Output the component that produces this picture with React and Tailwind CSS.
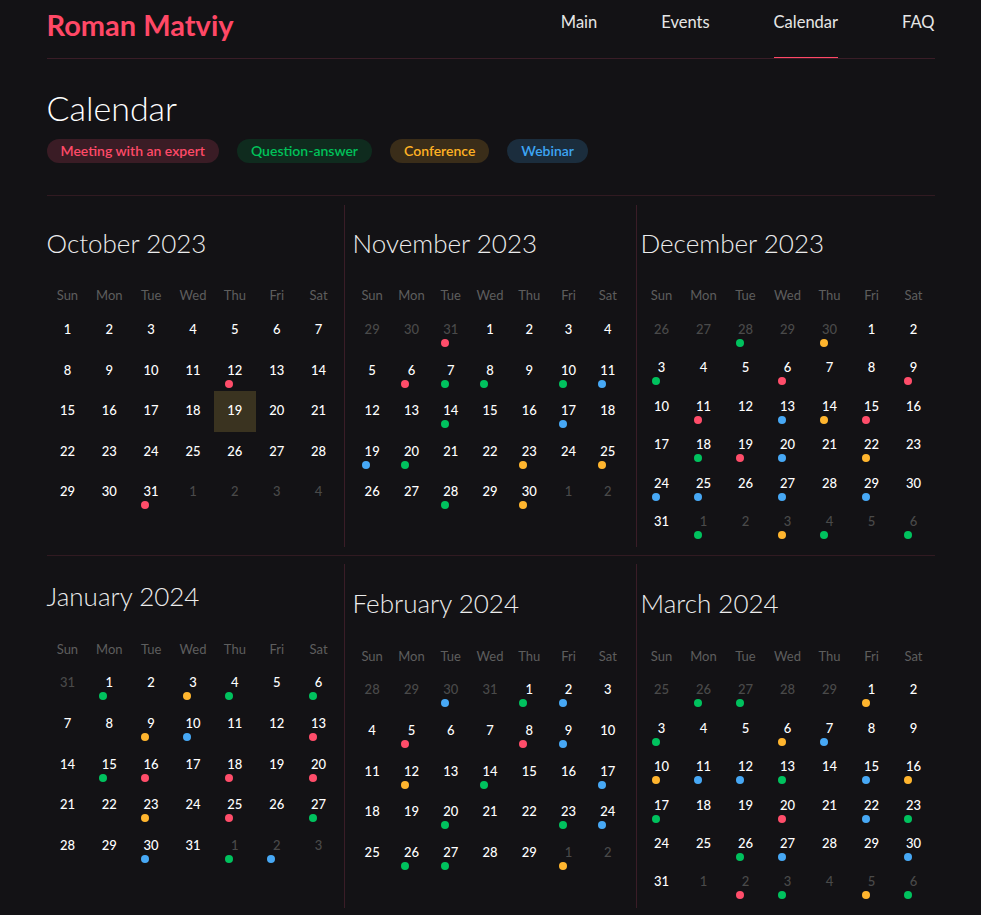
import clsx from 'clsx';

const DOT = {
  r: 'bg-[#ff4d6a]',
  g: 'bg-[#00c25e]',
  y: 'bg-[#ffb52e]',
  b: 'bg-[#47a8f5]',
};

// events keyed by y-m (m is 1-based), then day
const RAW = {
  '2023-10': { 12: 'r', 31: 'r' },
  '2023-11': { 6: 'r', 7: 'g', 8: 'g', 10: 'g', 11: 'b', 14: 'g', 17: 'b', 19: 'b', 20: 'g', 23: 'y', 25: 'y', 28: 'g', 30: 'y' },
  '2023-12': { 3: 'g', 6: 'r', 9: 'r', 11: 'r', 13: 'b', 14: 'y', 15: 'r', 18: 'g', 19: 'r', 20: 'b', 22: 'y', 24: 'b', 25: 'b', 27: 'b', 29: 'b' },
  '2024-1': { 1: 'g', 3: 'y', 4: 'g', 6: 'g', 9: 'y', 10: 'b', 13: 'r', 15: 'g', 16: 'r', 18: 'r', 20: 'r', 23: 'y', 25: 'r', 27: 'g', 30: 'b' },
  '2024-2': { 1: 'g', 2: 'b', 5: 'r', 8: 'r', 9: 'b', 12: 'y', 14: 'g', 17: 'b', 20: 'g', 23: 'g', 24: 'b', 26: 'g', 27: 'g' },
  '2024-3': { 1: 'y', 3: 'g', 6: 'y', 7: 'b', 10: 'y', 11: 'b', 12: 'b', 13: 'g', 15: 'b', 16: 'y', 17: 'g', 20: 'r', 22: 'b', 23: 'g', 26: 'g', 27: 'b', 30: 'b' },
  '2024-4': { 2: 'r', 3: 'g', 5: 'y', 6: 'g' },
};

const eventFor = (d) => RAW[`${d.getFullYear()}-${d.getMonth() + 1}`]?.[d.getDate()];

const MONTHS = ['January', 'February', 'March', 'April', 'May', 'June', 'July', 'August', 'September', 'October', 'November', 'December'];
const WEEK = ['Sun', 'Mon', 'Tue', 'Wed', 'Thu', 'Fri', 'Sat'];

function buildDays(year, month) {
  const first = new Date(year, month, 1);
  const last = new Date(year, month + 1, 0);
  const days = [];
  const cur = new Date(year, month, 1 - first.getDay());
  const end = new Date(year, month, last.getDate() + (6 - last.getDay()));
  while (cur <= end) {
    days.push(new Date(cur));
    cur.setDate(cur.getDate() + 1);
  }
  return days;
}

function Month({ year, month, className }) {
  const days = buildDays(year, month);
  const six = days.length > 35;

  return (
    <div className={clsx('flex flex-col pb-[7px]', className)}>
      <h2 className="h-[34px] text-[26px] font-light leading-[34px] text-[#ececec]">
        {MONTHS[month]} {year}
      </h2>
      <div className="mt-[22px] grid h-[28px] grid-cols-7 items-center text-center text-[13px] text-[#5e5e5e]">
        {WEEK.map((w) => (
          <span key={w}>{w}</span>
        ))}
      </div>
      <div className="grid grid-cols-7">
        {days.map((d) => {
          const inMonth = d.getMonth() === month;
          const ev = eventFor(d);
          const today = d.getFullYear() === 2023 && d.getMonth() === 9 && d.getDate() === 19;
          return (
            <div
              key={d.toISOString()}
              className={clsx(
                'relative pt-[9px] text-center text-[13px] font-medium leading-5',
                six ? 'h-[38.4px]' : 'h-[40.6px]',
                inMonth ? 'text-white' : 'text-[#4a4a4a]',
                today && 'bg-[#3a3320]'
              )}
            >
              {d.getDate()}
              {ev && (
                <span
                  className={clsx(
                    'absolute left-[calc(50%-10px)] top-[29px] h-2 w-2 rounded-full',
                    DOT[ev]
                  )}
                />
              )}
            </div>
          );
        })}
      </div>
    </div>
  );
}

const chips = [
  { label: 'Meeting with an expert', cls: 'bg-[#3a1c25] text-[#ff4a68]' },
  { label: 'Question-answer', cls: 'bg-[#0f2b1e] text-[#00c25a]' },
  { label: 'Conference', cls: 'bg-[#3a2d19] text-[#ffb224]' },
  { label: 'Webinar', cls: 'bg-[#1b2d3d] text-[#3da5f4]' },
];

const nav = ['Main', 'Events', 'Calendar', 'FAQ'];

export default function App() {
  return (
    <div className="min-h-screen bg-[#131215] font-['Lato','Noto_Sans',sans-serif]">
      <div className="mx-auto w-[888px] pb-6">
        <header className="flex h-[59px] items-start justify-between border-b border-[#3a1d27]">
          <a className="mt-[8px] text-[29px] font-bold leading-[34px] text-[#ff4866]">Roman Matviy</a>
          <nav className="flex h-full gap-16">
            {nav.map((n) => (
              <a
                key={n}
                className={clsx(
                  'h-full pt-[10px] text-[16.5px] leading-6 text-[#e6e6e6]',
                  n === 'Calendar' && 'border-b border-[#ff4866]'
                )}
              >
                {n}
              </a>
            ))}
          </nav>
        </header>

        <h1 className="mt-[28px] text-[34px] font-light leading-[41px] text-white">Calendar</h1>
        <div className="mt-[11px] flex gap-[18px]">
          {chips.map((c) => (
            <span key={c.label} className={clsx('h-6 rounded-full px-[14px] text-[14px] font-semibold leading-6', c.cls)}>
              {c.label}
            </span>
          ))}
        </div>

        <div className="mt-[32px] border-t border-[#311a21]" />

        <div className="mt-[9px] flex items-stretch">
          <Month year={2023} month={9} className="w-[297px] pr-1 pt-[21px]" />
          <Month year={2023} month={10} className="w-[293px] border-x border-[#3a1d27] px-2 pt-[21px]" />
          <Month year={2023} month={11} className="flex-1 pl-1 pt-[21px]" />
        </div>

        <div className="mt-2 border-t border-[#311a21]" />

        <div className="mt-2 flex items-stretch">
          <Month year={2024} month={0} className="w-[297px] pr-1 pt-[15px]" />
          <Month year={2024} month={1} className="w-[293px] border-x border-[#3a1d27] px-2 pt-[22px]" />
          <Month year={2024} month={2} className="flex-1 pl-1 pt-[22px]" />
        </div>
      </div>
    </div>
  );
}
